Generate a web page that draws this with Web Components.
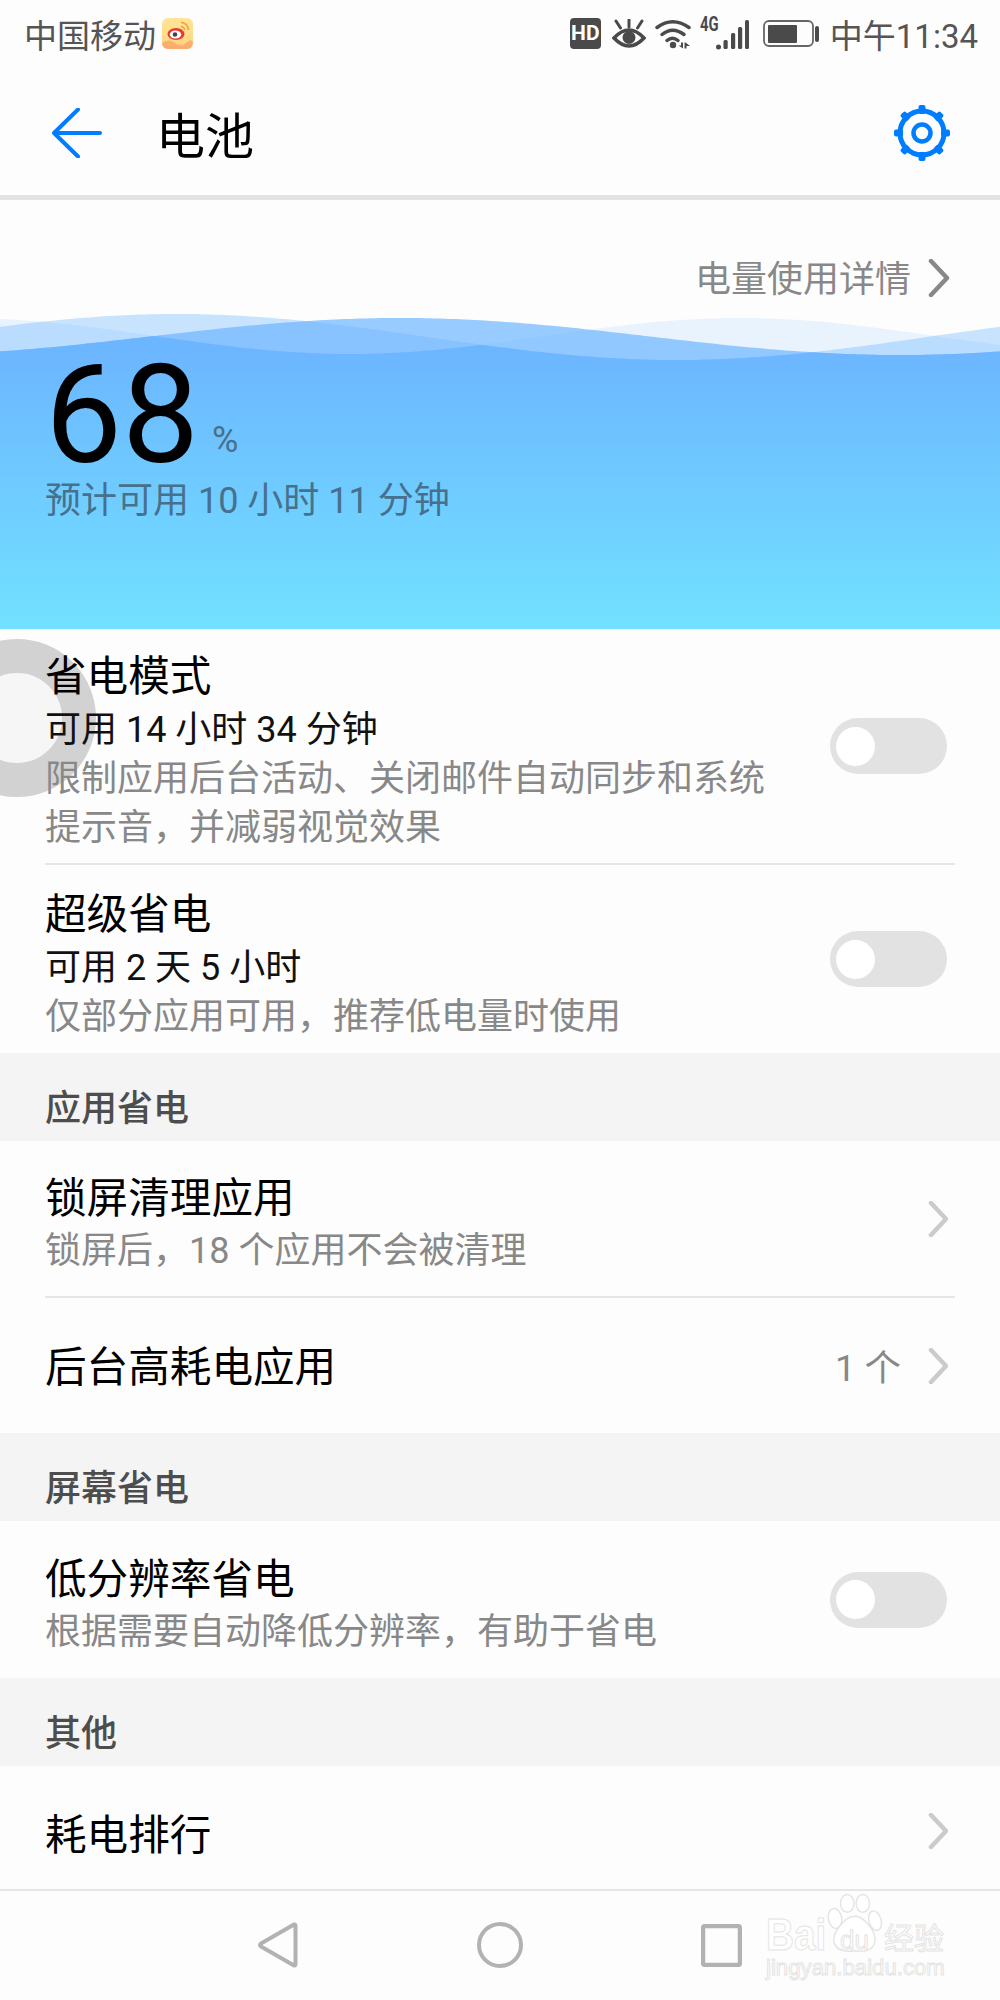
<!DOCTYPE html>
<html lang="zh">
<head>
<meta charset="utf-8">
<title>电池</title>
<style>
    html, body { margin: 0; padding: 0; }
    body {
        width: 1000px;
        height: 2000px;
        overflow: hidden;
        position: relative;
        background: #fdfdfd;
        font-family: Roboto, "Noto Sans CJK SC", sans-serif;
        color: #000;
    }
</style>
</head>
<body>
<status-bar></status-bar>
<app-toolbar>电池</app-toolbar>
<battery-hero level="68" left="预计可用 10 小时 11 分钟">电量使用详情</battery-hero>
<touch-ring></touch-ring>
<pref-row height="236" divider toggle>
    省电模式
    <span slot="avail">可用 14 小时 34 分钟</span>
    <span slot="desc">限制应用后台活动、关闭邮件自动同步和系统<br>提示音，并减弱视觉效果</span>
</pref-row>
<pref-row height="188" toggle>
    超级省电
    <span slot="avail">可用 2 天 5 小时</span>
    <span slot="desc">仅部分应用可用，推荐低电量时使用</span>
</pref-row>
<section-head>应用省电</section-head>
<pref-row height="157" divider arrow>
    锁屏清理应用
    <span slot="desc">锁屏后，18 个应用不会被清理</span>
</pref-row>
<pref-row height="135" arrow value="1 个" style="--text-top: 5px">后台高耗电应用</pref-row>
<section-head>屏幕省电</section-head>
<pref-row height="157" toggle>
    低分辨率省电
    <span slot="desc">根据需要自动降低分辨率，有助于省电</span>
</pref-row>
<section-head>其他</section-head>
<pref-row height="123" arrow style="--box-top: 7px">耗电排行</pref-row>
<nav-bar></nav-bar>

<script>
customElements.define(
    'status-bar',
    class extends HTMLElement {
        constructor() {
            super();

            this.attachShadow({ mode: 'open' }).innerHTML =
                `<style>
                    :host {
                        display: flex;
                        justify-content: space-between;
                        align-items: center;
                        box-sizing: border-box;
                        height: 70px;
                        padding: 0 22px 3px 24px;
                        font-size: 33px;
                        color: #555;
                    }
                    .side {
                        display: flex;
                        align-items: center;
                    }
                    svg {
                        display: block;
                        flex: none;
                    }
                    .hd {
                        width: 31px;
                        height: 31px;
                        border-radius: 4px;
                        background: #4a4a4a;
                        color: #fff;
                        font: bold 21px/31px "Liberation Sans Narrow", Roboto, sans-serif;
                        text-align: center;
                        margin-right: 11px;
                    }
                    .net {
                        width: 16px;
                        font: bold 19.500px/16px "Liberation Sans Narrow", Roboto, sans-serif;
                        color: #4a4a4a;
                        align-self: flex-start;
                        margin-top: 7px;
                        transform: scaleX(.76);
                        transform-origin: left;
                    }
                </style>
                <div class="side">
                    <span>中国移动</span>
                    <svg width="31" height="31" viewBox="0 0 31 31" style="margin-left:6px">
                        <defs>
                            <linearGradient id="wb" x1="0" y1="0" x2="0" y2="1">
                                <stop offset="0" stop-color="#ffe596"/>
                                <stop offset=".7" stop-color="#fddb86"/>
                                <stop offset="1" stop-color="#fcc080"/>
                            </linearGradient>
                        </defs>
                        <rect width="31" height="31" rx="6" fill="url(#wb)"/>
                        <path d="M0 25Q7 20 13 25T24 25T31 24V25A6 6 0 0 1 25 31H6A6 6 0 0 1 0 25Z" fill="#fb9a5e" opacity=".6"/>
                        <ellipse cx="14" cy="16" rx="8.500" ry="6" fill="#e8392f"/>
                        <ellipse cx="13.500" cy="16.500" rx="5.800" ry="4" fill="#fff"/>
                        <circle cx="13" cy="16.500" r="2.300" fill="#444"/>
                        <path d="M19 4.500A7.500 7.500 0 0 1 26.500 12M19 8.500A3.500 3.500 0 0 1 22.500 12" fill="none" stroke="#f0a040" stroke-width="1.600"/>
                    </svg>
                </div>
                <div class="side">
                    <span class="hd">HD</span>
                    <svg width="34" height="30" viewBox="0 0 34 30" style="margin-right:9px">
                        <g fill="none" stroke="#4a4a4a" stroke-linecap="round">
                            <path d="M17 1V8M4 2L8.500 9M30 2L25.500 9" stroke-width="3"/>
                            <path d="M2 19Q17 3 32 19Q17 35 2 19Z" stroke-width="3.600"/>
                        </g>
                        <circle cx="17" cy="18.500" r="6.500" fill="#4a4a4a"/>
                    </svg>
                    <svg width="36" height="30" viewBox="0 0 36 30" style="margin-right:9px">
                        <g fill="none" stroke="#4a4a4a" stroke-width="3.500" stroke-linecap="round">
                            <path d="M2 8.500Q17.500 -3 34 8.500"/>
                            <path d="M7 15.500Q17.500 7 29 15.500"/>
                            <path d="M12 21.500Q17.500 17 23 21.500"/>
                        </g>
                        <circle cx="18" cy="26" r="3.200" fill="#4a4a4a"/>
                        <path d="M23.500 26.500H26V23.500H28V29.500ZM29.500 23.500H30.500L35 27H31.500V29.500H29.500Z" fill="#4a4a4a"/>
                    </svg>
                    <span class="net">4G</span>
                    <svg width="33" height="31" viewBox="0 0 33 31" style="margin-right:14px;margin-top:1px">
                        <g fill="#4a4a4a">
                            <circle cx="2.500" cy="28" r="2.500"/>
                            <rect x="7.500" y="21" width="4.200" height="9" rx="1.500"/>
                            <rect x="15" y="14" width="4.200" height="16" rx="1.500"/>
                            <rect x="22" y="8" width="4.200" height="22" rx="1.500"/>
                            <rect x="29" y="1" width="4" height="29" rx="1.500"/>
                        </g>
                    </svg>
                    <svg width="56" height="28" viewBox="0 0 56 28" style="margin-right:11px;margin-top:1px">
                        <rect x="1" y="1" width="49" height="25" rx="5" fill="none" stroke="#666" stroke-width="1.800"/>
                        <rect x="5" y="5" width="29" height="18" rx="1" fill="#4a4a4a"/>
                        <rect x="52" y="6" width="4" height="16" rx="2" fill="#4a4a4a"/>
                    </svg>
                    <span>中午11:34</span>
                </div>`;
        }
    }
);

customElements.define(
    'app-toolbar',
    class extends HTMLElement {
        constructor() {
            super();

            const teeth = [0, 45, 90, 135, 180, 225, 270, 315]
                .map(deg => `<rect x="24.500" y="0" width="7" height="9" rx="2" transform="rotate(${deg} 28 28)"/>`)
                .join('');

            this.attachShadow({ mode: 'open' }).innerHTML =
                `<style>
                    :host {
                        display: flex;
                        align-items: center;
                        height: 125px;
                        padding: 0 50px 0 52px;
                        border-bottom: 5px solid #e3e3e3;
                    }
                    .title {
                        flex: 1;
                        margin: 10px 0 0 54px;
                        font-size: 49px;
                        line-height: 60px;
                        color: #000;
                    }
                    svg {
                        display: block;
                        flex: none;
                    }
                </style>
                <svg width="50" height="50" viewBox="0 0 50 50">
                    <path d="M26 1.500L2 25L26 48.500M2 25H48" fill="none" stroke="#007dff" stroke-width="4" stroke-linecap="round" stroke-linejoin="round"/>
                </svg>
                <div class="title"><slot></slot></div>
                <svg width="56" height="56" viewBox="0 0 56 56">
                    <g fill="#007dff">${teeth}</g>
                    <circle cx="28" cy="28" r="22" fill="none" stroke="#007dff" stroke-width="5"/>
                    <circle cx="28" cy="28" r="8.500" fill="none" stroke="#007dff" stroke-width="4.500"/>
                </svg>`;
        }
    }
);

customElements.define(
    'battery-hero',
    class extends HTMLElement {
        constructor() {
            super();

            this.attachShadow({ mode: 'open' }).innerHTML =
                `<style>
                    :host {
                        display: block;
                        position: relative;
                        height: 429px;
                    }
                    svg.waves {
                        position: absolute;
                        left: 0;
                        top: 0;
                    }
                    .inner {
                        position: relative;
                    }
                    .details {
                        display: flex;
                        justify-content: flex-end;
                        align-items: center;
                        height: 56px;
                        padding: 50px 50px 0 0;
                        font-size: 36px;
                        color: #888;
                    }
                    .details span {
                        margin-top: -4px;
                    }
                    .details svg {
                        margin-left: 17px;
                    }
                    .level {
                        display: flex;
                        align-items: baseline;
                        margin-top: 59px;
                        padding-left: 45px;
                        font-size: 137px;
                        line-height: 100px;
                        color: #000;
                    }
                    .level span {
                        position: relative;
                        top: -10px;
                        margin-left: 13px;
                        font-size: 36px;
                        color: #47708c;
                    }
                    .left {
                        padding-left: 45px;
                        margin-top: -24px;
                        font-size: 36px;
                        line-height: 50px;
                        color: #47708c;
                    }
                </style>
                <svg class="waves" width="1000" height="429" viewBox="0 200 1000 429">
                    <defs>
                        <linearGradient id="sea" gradientUnits="userSpaceOnUse" x1="0" y1="345" x2="0" y2="629">
                            <stop offset="0" stop-color="#6cb5ff"/>
                            <stop offset="1" stop-color="#72e1ff"/>
                        </linearGradient>
                    </defs>
                    <path class="c" fill="#6cb5ff" fill-opacity=".14"/>
                    <path class="b" fill="#6cb5ff" fill-opacity=".37"/>
                    <path class="a" fill="#6cb5ff" fill-opacity=".7"/>
                    <path class="front" fill="url(#sea)"/>
                </svg>
                <div class="inner">
                    <div class="details">
                        <span><slot></slot></span>
                        <svg width="22" height="38" viewBox="0 0 22 38">
                            <path d="M3 2L19 19L3 36" fill="none" stroke="#888" stroke-width="4.500" stroke-linecap="round" stroke-linejoin="round"/>
                        </svg>
                    </div>
                    <div class="level"><b style="font-weight:400" id="level"></b><span>%</span></div>
                    <div class="left" id="left"></div>
                </div>`;

            // three sine waves, fitted on the picture, filled to the bottom of the hero
            const curves = {
                a: x => 336.5 - 18.5 * Math.cos((2 * Math.PI * (x - 400)) / 1000),
                b: x => 337 - 23 * Math.cos((2 * Math.PI * (x - 177)) / 1000),
                c: x => 336 - 18 * Math.cos((2 * Math.PI * (x - 740)) / 780)
            };
            const fill = f => {
                let d = 'M0 629';
                for (let x = 0; x <= 1000; x += 5) {
                    d += `L${x} ${f(x).toFixed(1)}`;
                }
                return d + 'L1000 629Z';
            };

            for (const name in curves) {
                this.shadowRoot.querySelector('.' + name).setAttribute('d', fill(curves[name]));
            }
            this.shadowRoot.querySelector('.front').setAttribute(
                'd',
                fill(x => Math.max(curves.a(x), curves.b(x), curves.c(x)))
            );
        }

        connectedCallback() {
            this.shadowRoot.getElementById('level').textContent = this.getAttribute('level');
            this.shadowRoot.getElementById('left').textContent = this.getAttribute('left');
        }
    }
);

customElements.define(
    'touch-ring',
    class extends HTMLElement {
        constructor() {
            super();

            this.attachShadow({ mode: 'open' }).innerHTML =
                `<style>
                    :host {
                        position: absolute;
                        left: -62px;
                        top: 639px;
                        width: 90px;
                        height: 90px;
                        border: 34px solid #d2d2d2;
                        border-radius: 50%;
                        background: #f6f6f6;
                    }
                </style>`;
        }
    }
);

customElements.define(
    'toggle-switch',
    class extends HTMLElement {
        constructor() {
            super();

            this.attachShadow({ mode: 'open' }).innerHTML =
                `<style>
                    :host {
                        display: flex;
                        align-items: center;
                        flex: none;
                        box-sizing: border-box;
                        width: 117px;
                        height: 56px;
                        padding-left: 6px;
                        border-radius: 28px;
                        background: #e2e2e2;
                    }
                    div {
                        width: 39px;
                        height: 39px;
                        border-radius: 50%;
                        background: #fff;
                    }
                </style>
                <div></div>`;
        }
    }
);

customElements.define(
    'pref-row',
    class extends HTMLElement {
        constructor() {
            super();

            this.attachShadow({ mode: 'open' }).innerHTML =
                `<style>
                    :host {
                        display: block;
                        position: relative;
                        padding: 0 45px;
                    }
                    .box {
                        display: flex;
                        align-items: center;
                        box-sizing: border-box;
                        padding-top: var(--box-top, 0);
                    }
                    .box.line {
                        border-bottom: 2px solid #e6e6e6;
                    }
                    .text {
                        flex: 1;
                        padding-top: var(--text-top, 10px);
                    }
                    .title {
                        font-size: 41.600px;
                        line-height: 56px;
                        color: #000;
                    }
                    .avail {
                        font-size: 36px;
                        line-height: 50px;
                        color: #111;
                    }
                    .desc {
                        font-size: 36px;
                        line-height: 49px;
                        color: #888;
                    }
                    .value {
                        font-size: 36.500px;
                        color: #888;
                        margin-right: 27px;
                    }
                    .control {
                        display: flex;
                        margin-right: 7px;
                    }
                    svg {
                        display: block;
                    }
                    .avail:not(.on), .desc:not(.on) {
                        display: none;
                    }
                </style>
                <div class="box">
                    <div class="text">
                        <div class="title"><slot></slot></div>
                        <div class="avail"><slot name="avail"></slot></div>
                        <div class="desc"><slot name="desc"></slot></div>
                    </div>
                    <div class="control"></div>
                </div>`;
        }

        connectedCallback() {
            const box = this.shadowRoot.querySelector('.box');
            const control = this.shadowRoot.querySelector('.control');

            box.style.height = this.getAttribute('height') + 'px';
            box.classList.toggle('line', this.hasAttribute('divider'));

            for (const name of ['avail', 'desc']) {
                if (this.querySelector(`[slot="${name}"]`)) {
                    this.shadowRoot.querySelector('.' + name).classList.add('on');
                }
            }

            if (this.hasAttribute('toggle')) {
                control.style.marginRight = '8px';
                control.innerHTML = '<toggle-switch></toggle-switch>';
            }

            if (this.hasAttribute('arrow')) {
                const value = this.getAttribute('value');
                control.innerHTML =
                    (value ? `<span class="value">${value}</span>` : '') +
                    `<svg width="20" height="36" viewBox="0 0 20 36">
                        <path d="M3 2L18 18L3 34" fill="none" stroke="#cbcbcb" stroke-width="4.500" stroke-linecap="round" stroke-linejoin="round"/>
                    </svg>`;
                control.style.alignItems = 'center';
            }
        }
    }
);

customElements.define(
    'section-head',
    class extends HTMLElement {
        constructor() {
            super();

            this.attachShadow({ mode: 'open' }).innerHTML =
                `<style>
                    :host {
                        display: flex;
                        align-items: center;
                        position: relative;
                        box-sizing: border-box;
                        height: 88px;
                        padding: 15px 45px 0;
                        background: #f4f4f4;
                        font-size: 36px;
                        font-weight: 500;
                        color: #4d4d4d;
                    }
                </style>
                <slot></slot>`;
        }
    }
);

customElements.define(
    'nav-bar',
    class extends HTMLElement {
        constructor() {
            super();

            this.attachShadow({ mode: 'open' }).innerHTML =
                `<style>
                    :host {
                        display: flex;
                        align-items: center;
                        position: relative;
                        box-sizing: border-box;
                        height: 112px;
                        padding: 0 0 2px 258px;
                        border-top: 2px solid #e6e6e6;
                    }
                    svg {
                        display: block;
                        flex: none;
                    }
                    .mark {
                        position: absolute;
                        left: 766px;
                        top: 3px;
                        width: 182px;
                        height: 90px;
                        color: #fff;
                        -webkit-text-stroke: 1px #e4e4e4;
                        font-family: "Liberation Sans", sans-serif;
                    }
                    .mark span {
                        position: absolute;
                        white-space: nowrap;
                    }
                </style>
                <svg width="40" height="46" viewBox="0 0 40 46" style="margin-right:179px">
                    <path d="M36 2.500Q37.500 2 37.500 4V42Q37.500 44 36 43.500L3 24.500Q1 23 3 21.500Z" fill="none" stroke="#b2b2b2" stroke-width="4" stroke-linejoin="round"/>
                </svg>
                <svg width="46" height="46" viewBox="0 0 46 46" style="margin-right:178px">
                    <circle cx="23" cy="23" r="21" fill="none" stroke="#b2b2b2" stroke-width="4"/>
                </svg>
                <svg width="41" height="43" viewBox="0 0 41 43">
                    <rect x="2" y="2" width="37" height="39" rx="2" fill="none" stroke="#b2b2b2" stroke-width="4.500"/>
                </svg>
                <div class="mark">
                    <svg width="56" height="60" viewBox="0 0 50 54" style="position:absolute;left:61px;top:0">
                        <g fill="#fff" stroke="#e4e4e4" stroke-width="1.300">
                            <ellipse cx="7" cy="22" rx="6" ry="9" transform="rotate(-10 7 22)"/>
                            <ellipse cx="18" cy="8.500" rx="6" ry="8"/>
                            <ellipse cx="32" cy="8.500" rx="6" ry="8"/>
                            <ellipse cx="43" cy="24" rx="5.500" ry="9" transform="rotate(-15 43 24)"/>
                            <path d="M25 20C33 20 44 34 43 42C42 52 32 52 25 51C18 52 8 52 6 43C5 33 17 20 25 20Z"/>
                        </g>
                    </svg>
                    <span style="left:0;top:21px;font-size:44px;line-height:40px;font-weight:bold;transform:scaleX(.88);transform-origin:left">Bai</span>
                    <span style="left:74px;top:33px;font-size:26px;line-height:26px">du</span>
                    <span style="left:118px;top:26px;font-size:30px;line-height:32px;font-family:'Noto Sans CJK SC',sans-serif">经验</span>
                    <span style="left:0;top:62px;font-size:22.200px;line-height:24px">jingyan.baidu.com</span>
                </div>`;
        }
    }
);
</script>
</body>
</html>
